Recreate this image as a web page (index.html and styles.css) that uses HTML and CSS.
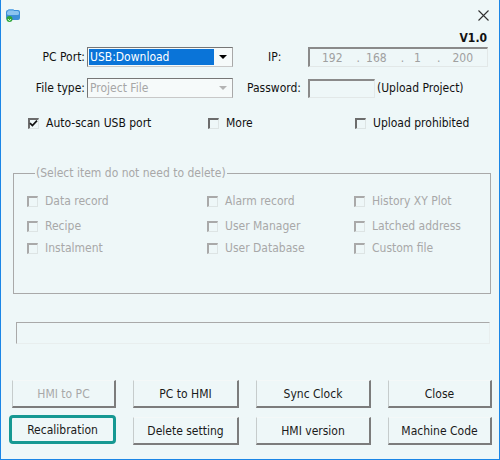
FILE: index.html
```html
<!DOCTYPE html>
<html>
<head>
<meta charset="utf-8">
<link rel="stylesheet" href="styles.css">
</head>
<body>
<div class="window">
  <div class="titlebar">
    <svg class="app-icon" width="16" height="15" viewBox="0 0 16 15">
      <rect x="1" y="2" width="14" height="10" rx="2" fill="#3d8fd8"/>
      <rect x="2" y="3" width="12" height="4" rx="1.5" fill="#8cc4f0"/>
      <rect x="3" y="1" width="6" height="2" rx="1" fill="#6aaee8"/>
      <circle cx="4.5" cy="11" r="3" fill="#2fa63a"/>
      <path d="M3 11 L4.5 12.8 L6 11" stroke="#dff5df" stroke-width="1" fill="none"/>
    </svg>
    <svg class="close-icon" width="11" height="11" viewBox="0 0 11 11">
      <path d="M0.5 0.5 L10.5 10.5 M10.5 0.5 L0.5 10.5" stroke="#303030" stroke-width="1.1"/>
    </svg>
  </div>
  <div class="version">V1.0</div>

  <div class="row row-port">
    <span class="lbl lbl-left">PC Port:</span>
    <div class="combo">
      <span class="combo-sel">USB:Download</span>
      <span class="combo-btn"><span class="arrow"></span></span>
    </div>
    <span class="lbl lbl-ip">IP:</span>
    <div class="field ipfield">
      <span class="o1">192</span><span class="d1">.</span><span class="o2">168</span><span class="d2">.</span><span class="o3">1</span><span class="d3">.</span><span class="o4">200</span>
    </div>
  </div>

  <div class="row row-file">
    <span class="lbl lbl-left">File type:</span>
    <div class="combo disabled">
      <span class="combo-text">Project File</span>
      <span class="combo-btn"><span class="arrow"></span></span>
    </div>
    <span class="lbl lbl-pass">Password:</span>
    <div class="field pwfield"></div>
    <span class="lbl upload-note">(Upload Project)</span>
  </div>

  <div class="checkgrid row-checks">
    <label class="chk"><span class="box checked"><svg width="9" height="9" viewBox="0 0 9 9"><path d="M1 4.2 L3.4 6.6 L8 1.6" stroke="#111" stroke-width="1.7" fill="none"/></svg></span>Auto-scan USB port</label>
    <label class="chk"><span class="box"></span>More</label>
    <label class="chk"><span class="box"></span>Upload prohibited</label>
  </div>

  <fieldset class="group">
    <legend>(Select item do not need to delete)</legend>
    <div class="checkgrid grp-row grp-row1">
      <label class="chk off"><span class="box"></span>Data record</label>
      <label class="chk off"><span class="box"></span>Alarm record</label>
      <label class="chk off"><span class="box"></span>History XY Plot</label>
    </div>
    <div class="checkgrid grp-row grp-row2">
      <label class="chk off"><span class="box"></span>Recipe</label>
      <label class="chk off"><span class="box"></span>User Manager</label>
      <label class="chk off"><span class="box"></span>Latched address</label>
    </div>
    <div class="checkgrid grp-row grp-row3">
      <label class="chk off"><span class="box"></span>Instalment</label>
      <label class="chk off"><span class="box"></span>User Database</label>
      <label class="chk off"><span class="box"></span>Custom file</label>
    </div>
  </fieldset>

  <div class="progress"></div>

  <div class="buttons">
    <div class="btn disabled">HMI to PC</div>
    <div class="btn">PC to HMI</div>
    <div class="btn">Sync Clock</div>
    <div class="btn">Close</div>
    <div class="btn focused">Recalibration</div>
    <div class="btn">Delete setting</div>
    <div class="btn">HMI version</div>
    <div class="btn">Machine Code</div>
  </div>
</div>
</body>
</html>
```

FILE: styles.css
```css
* { box-sizing: border-box; }
html, body { margin: 0; padding: 0; }
body {
  width: 500px;
  height: 460px;
  overflow: hidden;
  font-family: "DejaVu Sans Condensed", "DejaVu Sans", sans-serif;
  font-size: 12px;
  color: #111;
}
.window {
  width: 500px;
  height: 460px;
  background: #eef7f8;
  border-left: 1px solid #1b86e6;
  border-right: 1px solid #1b86e6;
  border-bottom: 1px solid #1b86e6;
}
.titlebar {
  height: 30px;
  display: flex;
  align-items: flex-start;
  justify-content: space-between;
  padding: 8px 10px 0 4px;
}
.close-icon { margin-top: 2px; }
.version {
  height: 16px;
  line-height: 16px;
  text-align: right;
  padding-right: 12px;
  font-weight: bold;
}
.row {
  display: flex;
  align-items: center;
  height: 20px;
}
.row-port { margin-top: 1px; }
.row-file { margin-top: 11px; }
.lbl { white-space: nowrap; }
.lbl-left {
  width: 86px;
  text-align: right;
  padding-right: 2px;
}
.combo {
  width: 146px;
  height: 20px;
  display: flex;
  border-top: 1px solid #767676;
  border-left: 1px solid #767676;
  border-right: 1px solid #a8a8a8;
  border-bottom: 1px solid #c8c8c8;
  background: #f6fafa;
  padding: 1px;
}
.combo-sel {
  flex: 1;
  background: #0a74d8;
  color: #fff;
  line-height: 16px;
  padding-left: 1px;
}
.combo-text {
  flex: 1;
  color: #a6a6a6;
  line-height: 16px;
  padding-left: 1px;
}
.combo-btn {
  width: 17px;
  display: flex;
  align-items: center;
  justify-content: center;
}
.arrow {
  width: 0;
  height: 0;
  border-left: 4px solid transparent;
  border-right: 4px solid transparent;
  border-top: 4px solid #000;
}
.combo.disabled .arrow { border-top-color: #b4b4b4; }
.lbl-ip { margin-left: 35px; }
.lbl-pass {
  margin-left: 14px;
  width: 61px;
}
.field {
  height: 20px;
  border-top: 2px solid #8a8a8a;
  border-left: 2px solid #8a8a8a;
  border-right: 1px solid #e2e8e8;
  border-bottom: 1px solid #e2e8e8;
}
.ipfield {
  margin-left: auto;
  margin-right: 11px;
  width: 180px;
  color: #a0a0a0;
  display: flex;
  align-items: center;
  line-height: 16px;
}
.ipfield .o1 { margin-left: 12px; }
.ipfield .d1 { margin-left: 14px; }
.ipfield .o2 { margin-left: 6px; }
.ipfield .d2 { margin-left: 14px; }
.ipfield .o3 { margin-left: 10px; }
.ipfield .d3 { margin-left: 16px; }
.ipfield .o4 { margin-left: 12px; }
.pwfield {
  width: 67px;
  height: 19px;
}
.upload-note { margin-left: 2px; }

.checkgrid {
  display: grid;
  grid-template-columns: 180px 147px auto;
  align-items: center;
  height: 18px;
}
.row-checks {
  margin-top: 16px;
  padding-left: 27px;
}
.chk {
  display: flex;
  align-items: center;
  white-space: nowrap;
}
.box {
  width: 11px;
  height: 11px;
  margin-right: 7px;
  border-top: 2px solid #6c6c6c;
  border-left: 2px solid #6c6c6c;
  border-right: 1px solid #dde4e4;
  border-bottom: 1px solid #dde4e4;
  display: flex;
  align-items: center;
  justify-content: center;
}
.box svg { display: block; margin-left: -1px; margin-top: -1px; }
.chk.off { color: #a8a8a8; }
.chk.off .box {
  border-top-color: #a9a9a9;
  border-left-color: #a9a9a9;
}

.group {
  margin: 35px 8px 0 12px;
  padding: 0 0 36px 13px;
  border: 1px solid #a9a9a9;
  min-width: 0;
}
.group legend {
  margin-left: 8px;
  padding: 0 1px;
  line-height: 13px;
  color: #a8a8a8;
}
.grp-row1 { margin-top: 12px; }
.grp-row2 { margin-top: 7px; }
.grp-row3 { margin-top: 4px; }

.progress {
  margin: 28px 9px 0 15px;
  height: 22px;
  border-top: 1px solid #a9a9a9;
  border-left: 1px solid #a9a9a9;
  border-right: 1px solid #e8eeee;
  border-bottom: 1px solid #e8eeee;
}

.buttons {
  display: grid;
  grid-template-columns: 104px 106px 115px 104px;
  grid-auto-rows: 28px;
  column-gap: 17px;
  row-gap: 9px;
  margin-top: 36px;
  padding-left: 11px;
}
.btn {
  display: flex;
  align-items: center;
  justify-content: center;
  border-top: 1px solid #f4f8f8;
  border-left: 1px solid #c6cccc;
  border-right: 2px solid #7c7c7c;
  border-bottom: 2px solid #7c7c7c;
  color: #1a1a1a;
  white-space: nowrap;
}
.btn.disabled { color: #a8a8a8; }
.btn.focused {
  border: 3px solid #169892;
  border-radius: 4px;
  margin: -2px 0 1px -3px;
}
```
